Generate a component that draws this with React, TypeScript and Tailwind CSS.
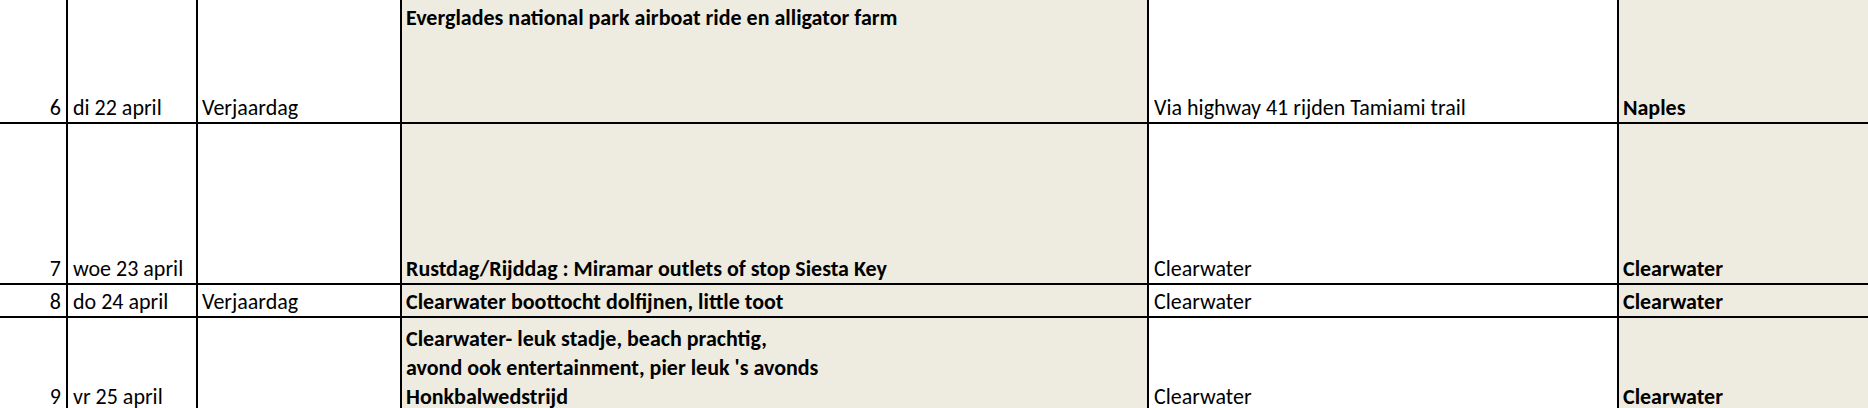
const rows = [
  {
    nr: "6",
    date: "di 22 april",
    note: "Verjaardag",
    plan: ["Everglades national park airboat ride en alligator farm"],
    planTop: true,
    route: "Via highway 41 rijden Tamiami trail",
    stay: "Naples",
    h: "h-[122px]",
  },
  {
    nr: "7",
    date: "woe 23 april",
    note: "",
    plan: ["Rustdag/Rijddag : Miramar outlets of stop Siesta Key"],
    route: "Clearwater",
    stay: "Clearwater",
    h: "h-[159px]",
  },
  {
    nr: "8",
    date: "do 24 april",
    note: "Verjaardag",
    plan: ["Clearwater boottocht dolfijnen, little toot"],
    route: "Clearwater",
    stay: "Clearwater",
    h: "h-[31px]",
  },
  {
    nr: "9",
    date: "vr 25 april",
    note: "",
    plan: [
      "Clearwater- leuk stadje, beach prachtig,",
      "avond ook entertainment, pier leuk 's avonds",
      "Honkbalwedstrijd",
    ],
    route: "Clearwater",
    stay: "Clearwater",
    h: "h-[93px]",
  },
];

const cell = "flex flex-col justify-end overflow-hidden whitespace-nowrap";

export default function App() {
  return (
    <div
      className="h-[408px] w-[1868px] overflow-hidden bg-white text-[22px] leading-[29px] text-black"
      style={{ fontFamily: "Carlito, Lato, 'Liberation Sans', sans-serif" }}
    >
      <div className="grid grid-cols-[66px_128px_202px_745px_468px_1fr] gap-[2px] bg-black">
        {rows.map((r) => (
          <div key={r.nr} className="contents">
            <div className={`${cell} ${r.h} items-end bg-white pr-[5px]`}>{r.nr}</div>
            <div className={`${cell} ${r.h} bg-white pl-[5px]`}>{r.date}</div>
            <div className={`${cell} ${r.h} bg-white pl-[4px]`}>{r.note}</div>
            <div
              className={`flex flex-col overflow-hidden whitespace-nowrap ${r.h} bg-[#eeece1] pl-[4px] font-bold ${
                r.planTop ? "justify-start pt-[3px]" : "justify-end"
              }`}
            >
              {r.plan.map((line) => (
                <div key={line}>{line}</div>
              ))}
            </div>
            <div className={`${cell} ${r.h} bg-white pl-[5px]`}>{r.route}</div>
            <div className={`${cell} ${r.h} bg-[#eeece1] pl-[4px] font-bold`}>{r.stay}</div>
          </div>
        ))}
      </div>
    </div>
  );
}
